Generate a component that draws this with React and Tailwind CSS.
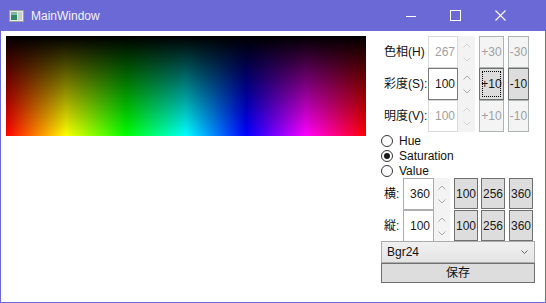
import React from "react";

const FONT = "font-['Liberation_Sans','Noto_Sans_CJK_JP',sans-serif]";

function Chevron({ dir, color }) {
  return (
    <svg width="8" height="5" viewBox="0 0 8 5" className="block">
      {dir === "up" ? (
        <polyline points="0.5,4.5 4,1 7.5,4.5" fill="none" stroke={color} strokeWidth="1" />
      ) : (
        <polyline points="0.5,0.5 4,4 7.5,0.5" fill="none" stroke={color} strokeWidth="1" />
      )}
    </svg>
  );
}

function Spin({ disabled, w }) {
  const c = disabled ? "#d4d4d4" : "#a8a8a8";
  return (
    <div className={`${w} h-full bg-[#f3f3f3] flex flex-col items-center justify-center gap-[9px]`}>
      <Chevron dir="up" color={c} />
      <Chevron dir="down" color={c} />
    </div>
  );
}

function Btn({ children, disabled, w, cls = "", focus }) {
  return (
    <div
      className={`${w} ${cls} relative flex items-center justify-center text-[12px] border ${
        disabled ? "bg-[#f4f4f4] border-[#adb2b5] text-[#a0a0a0]" : "bg-[#dddddd] border-[#707070] text-[#1a1a1a]"
      }`}
    >
      {focus && <div className="absolute inset-[2px] border border-dotted border-black" />}
      {children}
    </div>
  );
}

function HsvRow({ label, value, disabled, b1, b2, focus }) {
  return (
    <div className="flex h-[32px]">
      <div className="w-[47px] flex items-center pl-[3px] text-[12px] text-[#111] whitespace-nowrap">{label}</div>
      <div
        className={`w-[30px] border flex items-center justify-end pr-[2px] text-[12px] ${
          disabled ? "border-[#d9d9d9] text-[#a0a0a0]" : "border-[#7a7a7a] text-[#1a1a1a]"
        }`}
      >
        {value}
      </div>
      <Spin disabled={disabled} w="w-[17px]" />
      <Btn disabled={disabled} w="w-[25px]" cls="ml-[4px]" focus={focus}>
        {b1}
      </Btn>
      <Btn disabled={disabled} w="w-[21px]" cls="ml-[4px]">
        {b2}
      </Btn>
    </div>
  );
}

function Radio({ label, checked }) {
  return (
    <div className="flex h-[15px] items-center">
      <div className="w-[12px] h-[12px] rounded-full border border-[#333] bg-white flex items-center justify-center">
        {checked && <div className="w-[6px] h-[6px] rounded-full bg-[#1a1a1a]" />}
      </div>
      <span className="ml-[6px] text-[12px] text-[#111] leading-[14px]">{label}</span>
    </div>
  );
}

function SizeRow({ label, value }) {
  return (
    <div className="flex h-[32px]">
      <div className="w-[22px] flex items-center pl-[3px] text-[12px] text-[#111]">{label}</div>
      <div className="w-[31px] border border-[#abadb3] flex items-center justify-end pr-[3px] text-[12px] text-[#1a1a1a]">
        {value}
      </div>
      <Spin w="w-[16px]" />
      <div className="flex pb-[1px]">
        <Btn w="w-[24px]" cls="ml-[4px]">100</Btn>
        <Btn w="w-[24px]" cls="ml-[3px]">256</Btn>
        <Btn w="w-[24px]" cls="ml-[4px]">360</Btn>
      </div>
    </div>
  );
}

export default function App() {
  return (
    <div className={`${FONT} w-[546px] h-[303px] bg-[#6b69d6] flex flex-col px-[1px] pb-[1px]`}>
      <div className="h-[31px] flex items-center text-white shrink-0">
        <svg width="15" height="12" viewBox="0 0 15 12" className="ml-[8px]">
          <rect x="0.5" y="0.5" width="14" height="11" fill="#e8ece8" stroke="#9aa29a" />
          <rect x="2" y="2" width="6" height="8" fill="#2f8a6a" />
          <rect x="2" y="2" width="6" height="3" fill="#7fb8a0" />
          <rect x="9" y="2" width="4" height="8" fill="#c8cfc8" />
        </svg>
        <span className="ml-[7px] text-[12px] text-[#f4f4ff]">MainWindow</span>
        <div className="flex-1" />
        <svg width="10" height="10" viewBox="0 0 10 10" className="mr-[34px]">
          <line x1="0" y1="5.5" x2="10" y2="5.5" stroke="white" strokeWidth="1" />
        </svg>
        <svg width="11" height="11" viewBox="0 0 11 11" className="mr-[34px]">
          <rect x="0.5" y="0.5" width="10" height="10" fill="none" stroke="white" strokeWidth="1" />
        </svg>
        <svg width="11" height="11" viewBox="0 0 11 11" className="mr-[39px]">
          <line x1="0.5" y1="0.5" x2="10.5" y2="10.5" stroke="white" strokeWidth="1.1" />
          <line x1="10.5" y1="0.5" x2="0.5" y2="10.5" stroke="white" strokeWidth="1.1" />
        </svg>
      </div>
      <div className="flex-1 bg-white flex pt-[5px] pl-[5px]">
        <div className="w-[360px] h-[100px] shrink-0 bg-[linear-gradient(to_bottom,#000,rgba(0,0,0,0)),linear-gradient(to_right,#f00,#ff0,#0f0,#0ff,#00f,#f0f,#f00)]" />
        <div className="ml-[15px] w-[154px] flex flex-col">
          <HsvRow label="色相(H)" value="267" disabled b1="+30" b2="-30" />
          <HsvRow label="彩度(S):" value="100" b1="+10" b2="-10" focus />
          <HsvRow label="明度(V):" value="100" disabled b1="+10" b2="-10" />
          <div className="pt-[1px]">
            <Radio label="Hue" />
            <Radio label="Saturation" checked />
            <Radio label="Value" />
          </div>
          <SizeRow label="横:" value="360" />
          <SizeRow label="縦:" value="100" />
          <div className="h-[22px] -mt-[1px] border border-[#acacac] bg-[linear-gradient(to_bottom,#f0f0f0,#e5e5e5)] flex items-center pl-[5px] pr-[6px] text-[12px] text-[#111]">
            <span className="flex-1">Bgr24</span>
            <svg width="7" height="4" viewBox="0 0 7 4">
              <polyline points="0.5,0.5 3.5,3.5 6.5,0.5" fill="none" stroke="#666" strokeWidth="1" />
            </svg>
          </div>
          <div className="h-[20px] border border-[#707070] bg-[#dddddd] flex items-center justify-center text-[12px] text-[#111]">
            保存
          </div>
        </div>
      </div>
    </div>
  );
}
